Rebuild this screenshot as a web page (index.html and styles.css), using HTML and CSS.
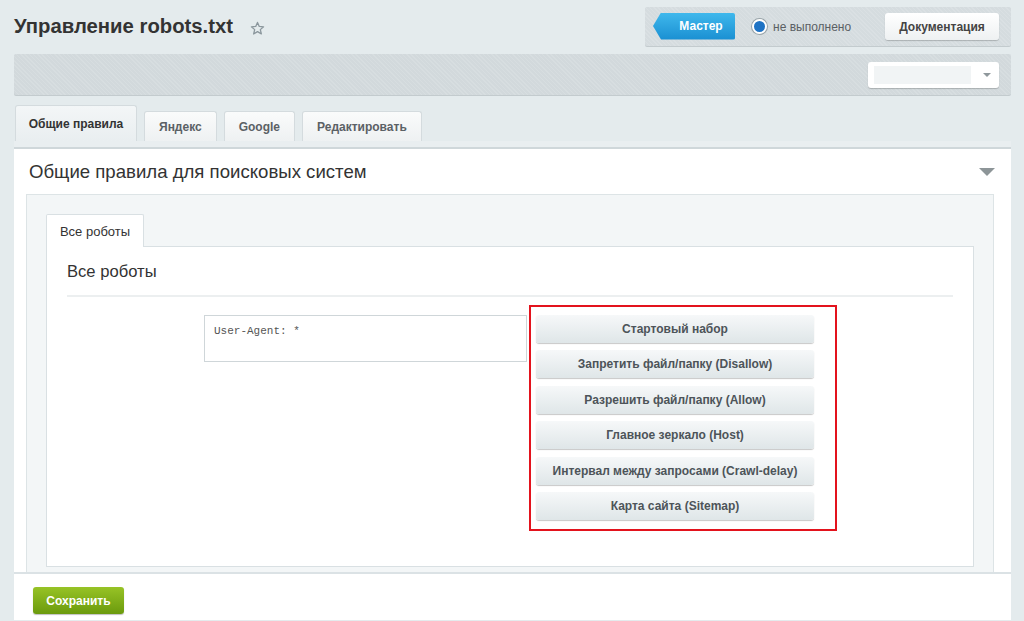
FILE: index.html
```html
<!DOCTYPE html>
<html lang="ru">
<head>
<meta charset="utf-8">
<title>Управление robots.txt</title>
<link rel="stylesheet" href="styles.css">
</head>
<body>
<div class="page">
  <div class="topbar">
    <div class="title-wrap">
      <h1 class="title">Управление robots.txt</h1>
      <svg class="star" width="15" height="15" viewBox="0 0 16 16"><path d="M8 1.5l1.9 4.3 4.6.4-3.5 3 1.1 4.6L8 11.4l-4.1 2.4 1.1-4.6-3.5-3 4.6-.4z" fill="none" stroke="#8b979d" stroke-width="1.4" stroke-linejoin="round"/></svg>
    </div>
    <div class="wizard">
      <span class="master">Мастер</span>
      <span class="radio"></span>
      <span class="status">не выполнено</span>
      <span class="doc-btn">Документация</span>
    </div>
  </div>
  <div class="toolbar">
    <div class="select"><span class="select-field"></span><span class="select-arrow"></span></div>
  </div>
  <div class="tabs">
    <span class="tab active">Общие правила</span>
    <span class="tab">Яндекс</span>
    <span class="tab">Google</span>
    <span class="tab">Редактировать</span>
  </div>
  <div class="tabs-base"></div>
  <div class="panel">
    <div class="panel-head">
      <h2 class="panel-title">Общие правила для поисковых систем</h2>
      <span class="collapse"></span>
    </div>
    <div class="inner">
      <div class="inner-tabs"><span class="inner-tab">Все роботы</span></div>
      <div class="inner-box">
        <h3 class="box-title">Все роботы</h3>
        <div class="row">
          <div class="textarea">User-Agent: *</div>
          <div class="highlight">
            <span class="btn">Стартовый набор</span>
            <span class="btn">Запретить файл/папку (Disallow)</span>
            <span class="btn">Разрешить файл/папку (Allow)</span>
            <span class="btn">Главное зеркало (Host)</span>
            <span class="btn">Интервал между запросами (Crawl-delay)</span>
            <span class="btn">Карта сайта (Sitemap)</span>
          </div>
        </div>
      </div>
    </div>
  </div>
  <div class="footer">
    <span class="save">Сохранить</span>
  </div>
</div>
</body>
</html>
```

FILE: styles.css
```css
html, body {
  margin: 0;
  padding: 0;
}
body {
  background: #e4ebed;
  font-family: "Liberation Sans", Arial, sans-serif;
  color: #333;
  height: 621px;
  overflow: hidden;
}
.page {
  margin: 0 13px 0 14px;
}
.topbar {
  display: flex;
  justify-content: space-between;
  align-items: flex-start;
  padding-top: 7px;
}
.title-wrap {
  display: flex;
  align-items: center;
  height: 39px;
}
.title {
  margin: 0;
  font-size: 20.3px;
  font-weight: bold;
  color: #333;
}
.star {
  margin-left: 17px;
  margin-top: 3px;
}
.wizard {
  width: 366px;
  height: 39px;
  box-sizing: border-box;
  background: #d5dcdf repeating-linear-gradient(45deg, rgba(255,255,255,0.12) 0 1px, transparent 1px 3px);
  border-radius: 2px;
  box-shadow: 0 1px 0 #c3cbce;
  display: flex;
  align-items: center;
  padding: 0 12px 0 8px;
}
.master {
  width: 82px;
  height: 27px;
  margin-top: -1px;
  box-sizing: border-box;
  padding-left: 14px;
  display: flex;
  align-items: center;
  justify-content: center;
  color: #fff;
  font-size: 12px;
  font-weight: bold;
  background: linear-gradient(#3fb8ec, #1a8fd2);
  clip-path: polygon(8px 0, 100% 0, 100% 100%, 8px 100%, 0 50%);
  border-radius: 0 2px 2px 0;
}
.radio {
  width: 11px;
  height: 11px;
  margin-left: 17px;
  border-radius: 50%;
  background: #1f73c4;
  border: 2px solid #fff;
  box-shadow: 0 0 0 1px #9aa5aa;
}
.status {
  margin-left: 6px;
  font-size: 12px;
  color: #5a6064;
}
.doc-btn {
  margin-left: auto;
  width: 114px;
  height: 27px;
  box-sizing: border-box;
  display: flex;
  align-items: center;
  justify-content: center;
  font-size: 12px;
  font-weight: bold;
  color: #444;
  background: linear-gradient(#ffffff, #eef1f2);
  border-radius: 3px;
  box-shadow: 0 1px 1px rgba(0,0,0,0.2);
}
.toolbar {
  margin-top: 8px;
  height: 41px;
  background: #d2d9dc repeating-linear-gradient(45deg, rgba(255,255,255,0.12) 0 1px, transparent 1px 3px);
  border-radius: 2px;
  box-shadow: 0 1px 0 #c3cbce;
  display: flex;
  justify-content: flex-end;
  align-items: center;
  padding-right: 12px;
}
.select {
  width: 131px;
  height: 26px;
  box-sizing: border-box;
  background: #fff;
  border-radius: 3px;
  box-shadow: 0 1px 1px rgba(0,0,0,0.2);
  display: flex;
  align-items: center;
  padding: 0 8px 0 6px;
}
.select-field {
  width: 97px;
  height: 18px;
  background: #f1f4f5;
}
.select-arrow {
  margin-left: auto;
  width: 0;
  height: 0;
  border-left: 4px solid transparent;
  border-right: 4px solid transparent;
  border-top: 4px solid #8f989c;
}
.tabs {
  margin-top: 10px;
  display: flex;
  align-items: flex-end;
  gap: 7px;
  padding-left: 1px;
}
.tab {
  height: 30px;
  box-sizing: border-box;
  padding: 0 14px;
  display: flex;
  align-items: center;
  font-size: 12px;
  font-weight: bold;
  color: #5b6165;
  background: linear-gradient(#fafbfb, #eef1f2);
  border: 1px solid #d4dbde;
  border-bottom: none;
  border-radius: 3px 3px 0 0;
}
.tab.active {
  height: 36px;
  width: 122px;
  justify-content: center;
  padding: 0;
  color: #333;
  background: linear-gradient(#f3f6f7, #e9eef0);
}
.tabs-base {
  height: 6px;
  background: #e9eef0;
  border-bottom: 2px solid #cfd7da;
}
.panel {
  background: #fff;
  padding: 0 17px 0 12px;
}
.panel-head {
  height: 45px;
  display: flex;
  align-items: center;
  padding: 0 0 0 3px;
}
.panel-title {
  margin: 0;
  font-size: 18.6px;
  font-weight: normal;
  color: #333;
  flex: 1;
}
.collapse {
  width: 0;
  height: 0;
  margin-right: -1px;
  margin-top: 1px;
  border-left: 8px solid transparent;
  border-right: 8px solid transparent;
  border-top: 8px solid #8d9598;
}
.inner {
  background: #f3f6f7;
  border: 1px solid #dde4e6;
  border-bottom: none;
  padding: 19px 19px 5px 19px;
}
.inner-tabs {
  display: flex;
}
.inner-tab {
  width: 98px;
  height: 33px;
  box-sizing: border-box;
  display: flex;
  align-items: center;
  justify-content: center;
  font-size: 13px;
  color: #333;
  background: #fff;
  border: 1px solid #d9e0e3;
  border-bottom: none;
  border-radius: 2px 2px 0 0;
  margin-bottom: -1px;
  position: relative;
  z-index: 1;
}
.inner-box {
  background: #fff;
  border: 1px solid #d9e0e3;
  height: 321px;
  box-sizing: border-box;
  padding: 0 20px;
}
.box-title {
  margin: 0;
  height: 50px;
  box-sizing: border-box;
  padding-top: 15px;
  font-size: 16.6px;
  font-weight: normal;
  color: #333;
  border-bottom: 2px solid #eceff0;
}
.row {
  display: flex;
  align-items: flex-start;
  padding-left: 137px;
  padding-top: 8px;
}
.textarea {
  width: 323px;
  height: 47px;
  box-sizing: border-box;
  margin-top: 10px;
  border: 1px solid #cfd6d9;
  padding: 9px 9px;
  font-family: "Liberation Mono", "Courier New", monospace;
  font-size: 11px;
  color: #555;
}
.highlight {
  margin-left: 2px;
  width: 308px;
  box-sizing: border-box;
  border: 2px solid #e3131d;
  padding: 8px 21px 9px 5px;
  display: flex;
  flex-direction: column;
  gap: 7.4px;
}
.btn {
  height: 28px;
  box-sizing: border-box;
  display: flex;
  align-items: center;
  justify-content: center;
  font-size: 12px;
  font-weight: bold;
  color: #4d5459;
  background: linear-gradient(#f6f8f9, #dfe6e8);
  border-radius: 3px;
  box-shadow: 0 1px 1px rgba(0,0,0,0.22);
}
.footer {
  background: #fff;
  border-top: 2px solid #dbe2e5;
  height: 48px;
  padding: 13px 0 0 19px;
  box-sizing: border-box;
  margin-top: 0;
}
.save {
  display: inline-flex;
  width: 91px;
  height: 27px;
  align-items: center;
  justify-content: center;
  font-size: 12px;
  font-weight: bold;
  color: #fff;
  background: linear-gradient(#97c326, #6b9a0d);
  border-radius: 3px;
  box-shadow: 0 1px 1px rgba(0,0,0,0.25);
}
```
